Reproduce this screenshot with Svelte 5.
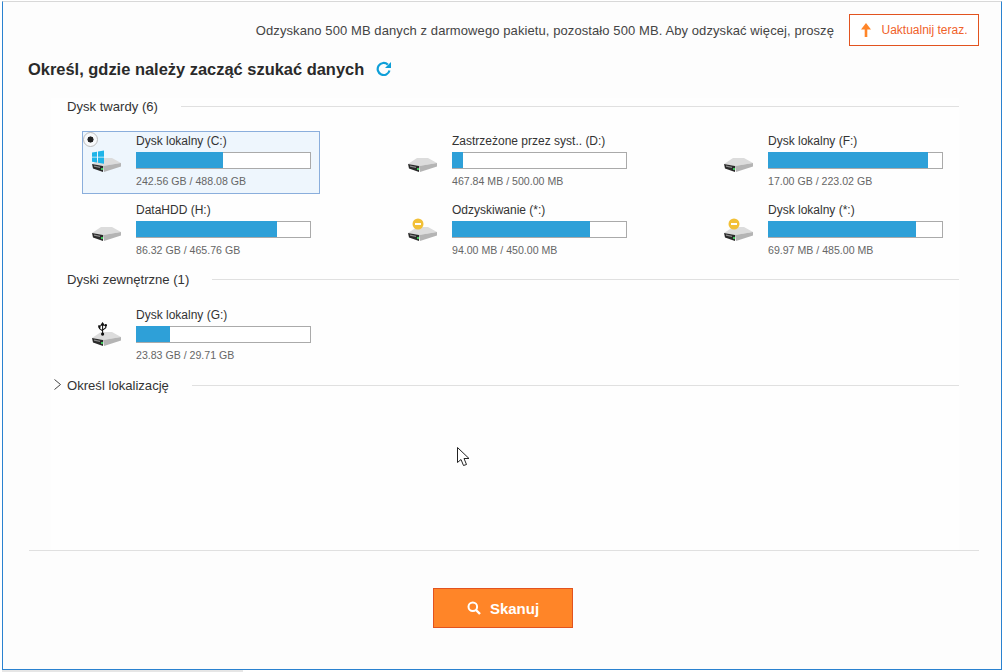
<script>
  const hardDisks = [
    { name: 'Dysk lokalny (C:)', used: '242.56 GB / 488.08 GB', pct: 49.7, badge: 'win', selected: true },
    { name: 'Zastrzeżone przez syst.. (D:)', used: '467.84 MB / 500.00 MB', pct: 6.4 },
    { name: 'Dysk lokalny (F:)', used: '17.00 GB / 223.02 GB', pct: 91.6 },
    { name: 'DataHDD (H:)', used: '86.32 GB / 465.76 GB', pct: 80.8 },
    { name: 'Odzyskiwanie (*:)', used: '94.00 MB / 450.00 MB', pct: 78.9, badge: 'minus' },
    { name: 'Dysk lokalny (*:)', used: '69.97 MB / 485.00 MB', pct: 84.8, badge: 'minus' }
  ];
  const externalDisks = [
    { name: 'Dysk lokalny (G:)', used: '23.83 GB / 29.71 GB', pct: 19.5, badge: 'usb' }
  ];
</script>

{#snippet drive(d)}
  <div class="drive" class:selected={d.selected}>
    {#if d.selected}<span class="radio"></span>{/if}
    <div class="icon">
      <svg width="32" height="44" viewBox="0 0 32 44">
        <path d="M1 28L10 22H21L30 27L12 30Z" fill="#dcdcdc" />
        <path d="M1 28L12 30V36L2 32.500Z" fill="#2a2a2a" />
        <path d="M12 30L30 27V30.500L13 36Z" fill="#b4b4b4" />
        <path d="M3 29.500L9 30.700V32L3 30.800Z" fill="#8c8c8c" />
        <rect x="10" y="32" width="2" height="2" fill="#3fc35a" />
        {#if d.badge === 'win'}
          <path d="M1 16.500l5-.8v5H1zM7 15.500l6-1v6.200H7zM1 21.500h5v5l-5-.8zM7 21.500h6v6.200l-6-1z" fill="#1fb4e8" />
        {:else if d.badge === 'minus'}
          <circle cx="11" cy="19" r="5.500" fill="#f2c037" />
          <rect x="8" y="18" width="6" height="2" fill="#fff" />
        {:else if d.badge === 'usb'}
          <g transform="translate(2 10.500) scale(.8)">
            <path d="M12 3v15M12 3l-2 3h4zM12 13l-4-3V8M12 12l4-3V7" fill="none" stroke="#111" stroke-width="1.300" />
            <rect x="6.500" y="6" width="3" height="3" fill="#111" />
            <circle cx="16" cy="6" r="1.500" fill="#111" />
            <circle cx="12" cy="17" r="2" fill="#111" />
          </g>
        {/if}
      </svg>
    </div>
    <div class="info">
      <div class="name">{d.name}</div>
      <div class="bar"><div class="fill" style="width: {d.pct}%"></div></div>
      <div class="used">{d.used}</div>
    </div>
  </div>
{/snippet}

<div class="window">
  <div class="notice">
    <span>Odzyskano 500 MB danych z darmowego pakietu, pozostało 500 MB. Aby odzyskać więcej, proszę</span>
    <button class="upgrade">
      <svg width="12" height="14" viewBox="0 0 12 14"><path d="M6 0L11 6.500H7.300V14H4.700V6.500H1Z" fill="#ff8528" /></svg>
      Uaktualnij teraz.
    </button>
  </div>

  <h1>Określ, gdzie należy zacząć szukać danych
    <svg width="16" height="16" viewBox="0 0 16 16">
      <path d="M13.500 9.500A6 6 0 1 1 11.800 3.600" fill="none" stroke="#0e9fd8" stroke-width="2.200" />
      <path d="M15 1v6H9z" fill="#0e9fd8" />
    </svg>
  </h1>

  <div class="panel">
    <div class="section"><span>Dysk twardy (6)</span></div>
    <div class="grid">
      {#each hardDisks as d}{@render drive(d)}{/each}
    </div>
    <div class="section external"><span>Dyski zewnętrzne (1)</span></div>
    <div class="grid second">
      {#each externalDisks as d}{@render drive(d)}{/each}
    </div>
    <div class="section location">
      <svg class="chevron" width="9" height="11" viewBox="0 0 9 11"><path d="M1.500 .5L7.500 5.500L1.500 10.500" fill="none" stroke="#444" /></svg>
      <span>Określ lokalizację</span>
    </div>
  </div>

  <div class="footer">
    <button class="scan">
      <svg width="14" height="14" viewBox="0 0 14 14">
        <circle cx="5.800" cy="5.800" r="4.300" fill="none" stroke="#fff" stroke-width="2" />
        <path d="M9 9l4 4" stroke="#fff" stroke-width="2.400" />
      </svg>
      Skanuj
    </button>
  </div>

  <svg class="cursor" width="14" height="21" viewBox="0 0 14 21">
    <path d="M.5 .5V15.500L4 12.500L6.500 18.500L9.500 17.500L7 11.500H12Z" fill="#fff" stroke="#222" />
  </svg>
</div>
<div class="taskbar"></div>

<style>
:global(body) {
  background: #fff;
}

.window {
  position: relative;
  box-sizing: border-box;
  width: 1000px;
  height: 669px;
  margin: 1px 0 0 2px;
  background: #fdfdfd;
  border: 1px solid #2a82d0;
  border-top: 1px solid #d8d8d8;
  font-family: "Liberation Sans", Arial, sans-serif;
  color: #333;
  font-size: 12px;
}

.notice {
  display: flex;
  justify-content: flex-end;
  align-items: center;
  gap: 15px;
  height: 32px;
  margin-top: 12px;
  padding-right: 22px;
  color: #444;
  font-size: 13px;
  letter-spacing: 0.09px;
}

.upgrade {
  display: flex;
  align-items: center;
  justify-content: center;
  gap: 9px;
  width: 130px;
  height: 32px;
  padding: 0;
  background: #fff;
  border: 1px solid #e2531f;
  color: #f0622a;
  font: 12px "Liberation Sans", Arial, sans-serif;
}

h1 {
  display: flex;
  align-items: center;
  gap: 12px;
  margin: 13px 0 0 25px;
  height: 20px;
  font-size: 16.450px;
  font-weight: bold;
  color: #2a2a2a;
}

.panel {
  margin: 19px 42px 0 48px;
  background: #fefefe;
  height: 452px;
}

.section {
  display: flex;
  align-items: center;
  height: 16px;
  padding-left: 16px;
  font-size: 13.100px;
  color: #333;
}

.section::after {
  content: "";
  flex: 1;
  height: 1px;
  margin-left: 23px;
  background: #e0e0e0;
}

.external {
  margin-top: 8px;
}

.location {
  position: relative;
  margin-top: 9px;
}

.chevron {
  position: absolute;
  left: 2px;
  top: 2px;
}

.grid {
  display: grid;
  grid-template-columns: repeat(3, 238px);
  column-gap: 78px;
  grid-auto-rows: 63px;
  row-gap: 6px;
  margin: 17px 0 0 31px;
}

.grid.second {
  margin-top: 18px;
}

.drive {
  position: relative;
  display: flex;
  box-sizing: border-box;
  height: 63px;
  border: 1px solid transparent;
}

.drive.selected {
  background: #eef6fd;
  border-color: #8aaedc;
}

.radio {
  position: absolute;
  left: 0;
  top: 0;
  width: 15px;
  height: 15px;
  box-sizing: border-box;
  border: 1px solid #bbb;
  border-radius: 50%;
  background: radial-gradient(circle, #222 2.800px, #f7f9fb 3.300px);
}

.icon {
  width: 53px;
  padding-left: 8px;
  box-sizing: border-box;
}

.icon svg {
  display: block;
  margin-top: 4px;
}

.info {
  width: 175px;
}

.name {
  margin-top: 2px;
  height: 15px;
  line-height: 15px;
  color: #333;
}

.bar {
  box-sizing: border-box;
  height: 17px;
  margin-top: 3px;
  background: #fff;
  box-shadow: inset 0 0 0 1px #aaa;
}

.fill {
  height: calc(100% - 1px);
  background: #2ea0d8;
}

.used {
  margin-top: 6px;
  font-size: 10.600px;
  color: #666;
}

.footer {
  display: flex;
  justify-content: center;
  margin: 0 22px 0 26px;
  padding: 37px 2px 0 0;
  border-top: 1px solid #e0e0e0;
}

.scan {
  display: flex;
  align-items: center;
  justify-content: center;
  gap: 9px;
  width: 140px;
  height: 40px;
  padding: 0;
  background: #ff8528;
  border: 1px solid #e2531f;
  color: #fff;
  font: bold 15px "Liberation Sans", Arial, sans-serif;
}

.cursor {
  position: absolute;
  left: 454px;
  top: 445px;
}

.taskbar {
  width: 241px;
  height: 2px;
  margin-left: 2px;
  background: #e6e6e6;
}
</style>
